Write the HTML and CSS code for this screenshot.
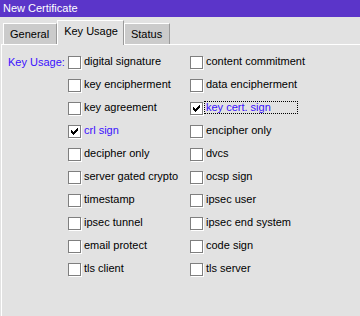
FILE: index.html
```html
<!DOCTYPE html>
<html>
<head>
<meta charset="utf-8">
<link rel="stylesheet" href="styles.css">
</head>
<body>
<div class="window">
  <div class="titlebar">New Certificate</div>
  <div class="tabs">
    <div class="tab">General</div>
    <div class="tab active">Key Usage</div>
    <div class="tab">Status</div>
  </div>
  <div class="panel">
    <div class="grid">
      <div class="label">Key Usage:</div>
      <label class="opt"><span class="box"></span><span class="txt">digital signature</span></label>
      <label class="opt"><span class="box"></span><span class="txt">content commitment</span></label>

      <div></div>
      <label class="opt"><span class="box"></span><span class="txt">key encipherment</span></label>
      <label class="opt"><span class="box"></span><span class="txt">data encipherment</span></label>

      <div></div>
      <label class="opt"><span class="box"></span><span class="txt">key agreement</span></label>
      <label class="opt"><span class="box"><svg viewBox="0 0 7 7" width="7" height="7" shape-rendering="crispEdges"><path d="M0 2h1v3h-1z M1 3h1v3h-1z M2 4h1v3h-1z M3 3h1v3h-1z M4 2h1v3h-1z M5 1h1v3h-1z M6 0h1v3h-1z" fill="#000"/></svg></span><span class="txt on focus">key cert. sign</span></label>

      <div></div>
      <label class="opt"><span class="box"><svg viewBox="0 0 7 7" width="7" height="7" shape-rendering="crispEdges"><path d="M0 2h1v3h-1z M1 3h1v3h-1z M2 4h1v3h-1z M3 3h1v3h-1z M4 2h1v3h-1z M5 1h1v3h-1z M6 0h1v3h-1z" fill="#000"/></svg></span><span class="txt on">crl sign</span></label>
      <label class="opt"><span class="box"></span><span class="txt">encipher only</span></label>

      <div></div>
      <label class="opt"><span class="box"></span><span class="txt">decipher only</span></label>
      <label class="opt"><span class="box"></span><span class="txt">dvcs</span></label>

      <div></div>
      <label class="opt"><span class="box"></span><span class="txt">server gated crypto</span></label>
      <label class="opt"><span class="box"></span><span class="txt">ocsp sign</span></label>

      <div></div>
      <label class="opt"><span class="box"></span><span class="txt">timestamp</span></label>
      <label class="opt"><span class="box"></span><span class="txt">ipsec user</span></label>

      <div></div>
      <label class="opt"><span class="box"></span><span class="txt">ipsec tunnel</span></label>
      <label class="opt"><span class="box"></span><span class="txt">ipsec end system</span></label>

      <div></div>
      <label class="opt"><span class="box"></span><span class="txt">email protect</span></label>
      <label class="opt"><span class="box"></span><span class="txt">code sign</span></label>

      <div></div>
      <label class="opt"><span class="box"></span><span class="txt">tls client</span></label>
      <label class="opt"><span class="box"></span><span class="txt">tls server</span></label>
    </div>
  </div>
</div>
</body>
</html>
```

FILE: styles.css
```css
html, body {
  margin: 0;
  padding: 0;
  background: #e2e2e2;
}
body {
  font-family: "Liberation Sans", sans-serif;
  font-size: 11px;
  color: #000;
  width: 360px;
  height: 316px;
  overflow: hidden;
}
.window {
  display: flex;
  flex-direction: column;
  height: 316px;
}
.titlebar {
  height: 17px;
  background: #5b35c9;
  color: #fff;
  font-size: 11px;
  line-height: 16px;
  padding-left: 3px;
}
.tabs {
  height: 27px;
  display: flex;
  align-items: flex-end;
  padding-left: 3px;
  position: relative;
  z-index: 1;
}
.tab {
  height: 20px;
  line-height: 21px;
  padding: 0 7px 0 6px;
  background: #cbcbcb;
  border-top: 1px solid #fff;
  border-left: 1px solid #fff;
  border-right: 1px solid #9a9a9a;
  font-size: 11px;
}
.tab.active {
  height: 24px;
  line-height: 21px;
  background: #e2e2e2;
  margin-bottom: -1px;
  padding: 0 5px 0 6px;
}
.panel {
  flex: 1;
  margin-left: 1px;
  border-top: 1px solid #fff;
  border-left: 1px solid #fff;
  padding-top: 11px;
}
.grid {
  display: grid;
  grid-template-columns: 66px 122px 1fr;
  grid-auto-rows: 13px;
  row-gap: 10px;
}
.label {
  color: #3a10ff;
  padding-left: 6px;
  font-size: 11px;
  line-height: 13px;
  white-space: nowrap;
}
.opt {
  display: flex;
  align-items: center;
  gap: 1px;
  white-space: nowrap;
}
.box {
  width: 11px;
  height: 11px;
  border: 1px solid #7f7f7f;
  background: #fff;
  box-shadow: 1px 1px 0 #fff;
  flex: none;
  display: flex;
  align-items: center;
  justify-content: center;
}
.box svg {
  display: block;
}
.txt {
  font-size: 11px;
  line-height: 11px;
  padding: 0 1px;
  border: 1px solid transparent;
  position: relative;
  top: -1px;
}
.txt.on {
  color: #3a10ff;
}
.txt.focus {
  border: 1px dotted #000;
  padding-right: 26px;
}
```
